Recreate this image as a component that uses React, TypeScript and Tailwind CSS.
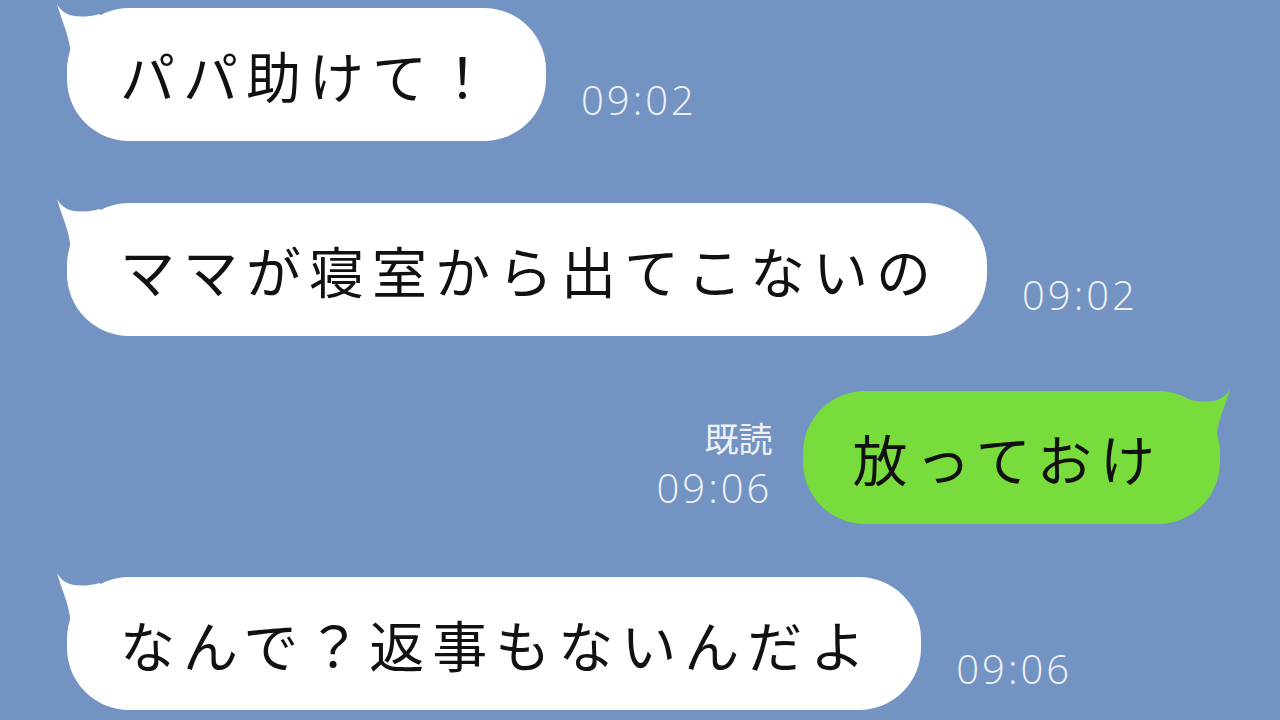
const jp = { fontFamily: '"Noto Sans CJK JP", "Noto Sans", sans-serif' };
const num = { fontFamily: '"Open Sans", "Liberation Sans", Arial, sans-serif' };

function TailLeft() {
  return (
    <svg className="absolute left-[-12px] top-[-6px]" width="60" height="60" viewBox="0 0 60 60">
      <path d="M2 2 C 8 13, 20 18, 45 12 L 45 55 L 16 55 C 15 34, 7 20, 2 2 Z" fill="#ffffff" />
    </svg>
  );
}

function TailRight() {
  return (
    <svg className="absolute right-[-12px] top-[-4px]" width="60" height="60" viewBox="0 0 60 60">
      <path d="M58 2 C 52 13, 40 18, 15 12 L 15 55 L 44 55 C 45 34, 53 20, 58 2 Z" fill="#78dc3c" />
    </svg>
  );
}

function Time({ t }: { t: string }) {
  return (
    <span className="text-[40px] font-light leading-none tracking-[3px] text-[#eef2f8]" style={num}>
      {t}
    </span>
  );
}

function Incoming({ text, time, className }: { text: string; time: string; className?: string }) {
  return (
    <div className={"flex items-end pl-[67px] " + (className ?? "")}>
      <div className="relative h-[133px] rounded-[62px] bg-white pl-[53px] pr-[48px] flex items-center">
        <TailLeft />
        <span className="relative text-[55px] leading-none tracking-[8px] text-[#111]" style={jp}>
          {text}
        </span>
      </div>
      <div className="ml-[35px] mb-[20px]">
        <Time t={time} />
      </div>
    </div>
  );
}

export default function App() {
  return (
    <div className="w-[1280px] h-[720px] overflow-hidden bg-[#7393c3] pt-[8px]">
      <Incoming text="パパ助けて！" time="09:02" />
      <Incoming text="ママが寝室から出てこないの" time="09:02" className="mt-[62px]" />

      <div className="mt-[55px] flex items-end justify-end pr-[60px]">
        <div className="mr-[31px] mb-[16px] flex flex-col items-end">
          <span className="text-[34px] leading-none text-[#eef2f8] mb-[13px]" style={jp}>
            既読
          </span>
          <Time t="09:06" />
        </div>
        <div className="relative h-[133px] rounded-[62px] bg-[#78dc3c] pl-[49px] pr-[57px] flex items-center">
          <TailRight />
          <span className="relative text-[55px] leading-none tracking-[8px] text-[#111]" style={jp}>
            放っておけ
          </span>
        </div>
      </div>

      <Incoming text="なんで？返事もないんだよ" time="09:06" className="mt-[53px]" />
    </div>
  );
}
